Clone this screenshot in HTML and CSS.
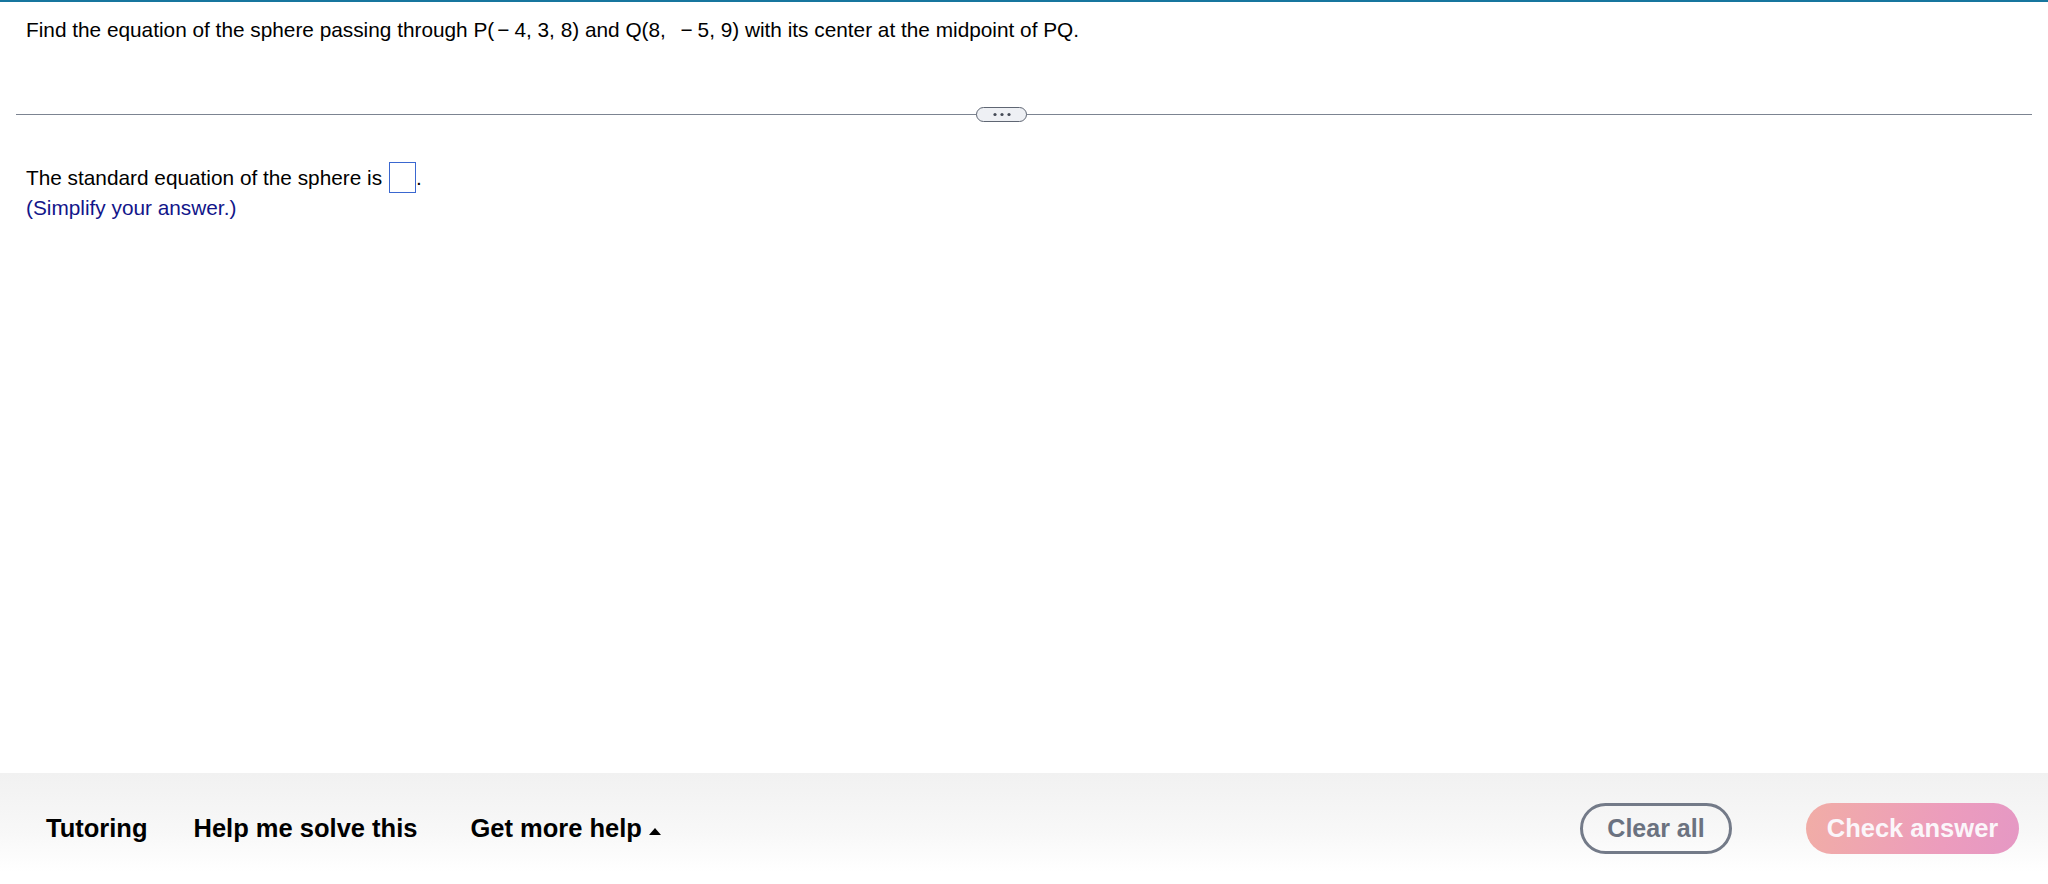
FILE: index.html
```html
<!DOCTYPE html>
<html lang="en">
<head>
    <meta charset="UTF-8">
    <meta name="viewport" content="width=device-width, initial-scale=1.0">
    <title>Question</title>
    <link rel="stylesheet" href="styles.css">
</head>
<body>
    <div class="page">
        <div class="question">
            Find the equation of the sphere passing through P(<span class="minus">&minus;</span>4, 3, 8) and Q(8, &nbsp;<span class="minus">&minus;</span>5, 9) with its center at the midpoint of PQ.
        </div>

        <div class="divider">
            <button class="more-btn" aria-label="more">
                <svg width="20" height="5" viewBox="0 0 20 5">
                    <circle cx="3" cy="2.5" r="1.6" fill="#454b57"/>
                    <circle cx="10" cy="2.5" r="1.6" fill="#454b57"/>
                    <circle cx="17" cy="2.5" r="1.6" fill="#454b57"/>
                </svg>
            </button>
        </div>

        <div class="answer">
            <div class="answer-line">The standard equation of the sphere is <span class="answer-box"></span>.</div>
            <div class="hint">(Simplify your answer.)</div>
        </div>
    </div>

    <div class="footer">
        <div class="help-links">
            <span class="help-link tutoring">Tutoring</span>
            <span class="help-link solve">Help me solve this</span>
            <span class="help-link more">Get more help <span class="caret"></span></span>
        </div>
        <div class="actions">
            <button class="clear-btn">Clear all</button>
            <button class="check-btn">Check answer</button>
        </div>
    </div>
</body>
</html>
```

FILE: styles.css
```css
body {
    margin: 0;
    font-family: "Liberation Sans", Arial, sans-serif;
    color: #000;
    background: #fff;
    height: 884px;
    display: flex;
    flex-direction: column;
    overflow: hidden;
}

.page {
    flex: 1;
    border-top: 2px solid #17769e;
}

.question {
    font-size: 20.8px;
    padding: 16px 0 0 26px;
    line-height: 24px;
}

.question .minus {
    margin: 0 5px 0 3px;
}

.divider {
    position: relative;
    margin: 72px 16px 0 16px;
    border-top: 1px solid #7c8491;
}

.more-btn {
    position: absolute;
    left: 960px;
    top: -8px;
    width: 51px;
    height: 15px;
    padding: 0;
    border: 1.5px solid #5f6673;
    border-radius: 8px;
    background-color: #eef0f4;
    display: flex;
    align-items: center;
    justify-content: center;
}

.more-btn svg {
    display: block;
}

.answer {
    font-size: 20.8px;
    padding: 47px 0 0 26px;
    line-height: 30px;
}

.answer-box {
    display: inline-block;
    width: 25px;
    height: 29px;
    border: 1px solid #3a67d0;
    vertical-align: -8px;
    margin-left: 1px;
}

.hint {
    color: #12168a;
}

.footer {
    height: 111px;
    background: linear-gradient(to bottom, #f1f1f1 0%, #f8f8f8 55%, #ffffff 90%);
    display: flex;
    align-items: center;
    justify-content: space-between;
    padding: 0 29px 0 46px;
}

.help-links {
    display: flex;
    align-items: center;
    font-size: 25.5px;
    font-weight: bold;
}

.help-link.solve {
    margin-left: 46px;
}

.help-link.more {
    margin-left: 53px;
    display: flex;
    align-items: center;
}

.caret {
    display: inline-block;
    width: 0;
    height: 0;
    border-left: 6px solid transparent;
    border-right: 6px solid transparent;
    border-bottom: 7px solid #000;
    margin-left: 7px;
    margin-top: 6px;
}

.actions {
    display: flex;
    align-items: center;
    gap: 74px;
}

.clear-btn {
    width: 152px;
    height: 51px;
    border: 3px solid #737a88;
    border-radius: 26px;
    background: transparent;
    color: #6b7280;
    font-family: "Liberation Sans", Arial, sans-serif;
    font-size: 25px;
    font-weight: bold;
    padding: 0;
}

.check-btn {
    width: 213px;
    height: 51px;
    border: none;
    border-radius: 26px;
    background: linear-gradient(100deg, #f1ada6 0%, #ec9cbd 65%, #e598c4 100%);
    color: #fbf6fa;
    font-family: "Liberation Sans", Arial, sans-serif;
    font-size: 25.5px;
    font-weight: bold;
    padding: 0;
}
```
